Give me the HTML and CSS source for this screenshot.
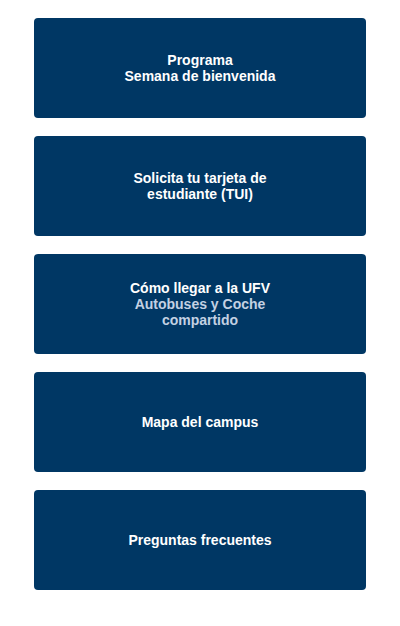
FILE: index.html
```html
<!DOCTYPE html>
<html lang="es">
  <head>
    <meta charset="UTF-8" />
    <meta name="viewport" content="width=device-width, initial-scale=1.0" />
    <title>Bienvenida UFV</title>
    <link rel="stylesheet" href="styles.css">
  </head>
  <body>
    <section class="menu">
      <a class="tile" href="#">
        <span class="label">Programa<br />Semana de bienvenida</span>
      </a>
      <a class="tile" href="#">
        <span class="label">Solicita tu tarjeta de estudiante (TUI)</span>
      </a>
      <a class="tile" href="#">
        <span class="label">
          Cómo llegar a la UFV
          <span class="sub">Autobuses y Coche compartido</span>
        </span>
      </a>
      <a class="tile" href="#">
        <span class="label">Mapa del campus</span>
      </a>
      <a class="tile" href="#">
        <span class="label">Preguntas frecuentes</span>
      </a>
    </section>
  </body>
</html>
```

FILE: styles.css
```css
body {
  margin: 0;
  background-color: #fff;
  font-family: "Liberation Sans", Arial, sans-serif;
}
.menu {
  display: flex;
  flex-direction: column;
  gap: 18px;
  padding: 18px 34px;
}
.tile {
  display: flex;
  align-items: center;
  justify-content: center;
  height: 100px;
  background-color: #003764;
  border-radius: 4px;
  text-decoration: none;
}
.label {
  max-width: 180px;
  color: #fff;
  font-size: 14px;
  font-weight: bold;
  line-height: 16px;
  text-align: center;
}
.sub {
  display: block;
  color: #c3d1e3;
}
```
